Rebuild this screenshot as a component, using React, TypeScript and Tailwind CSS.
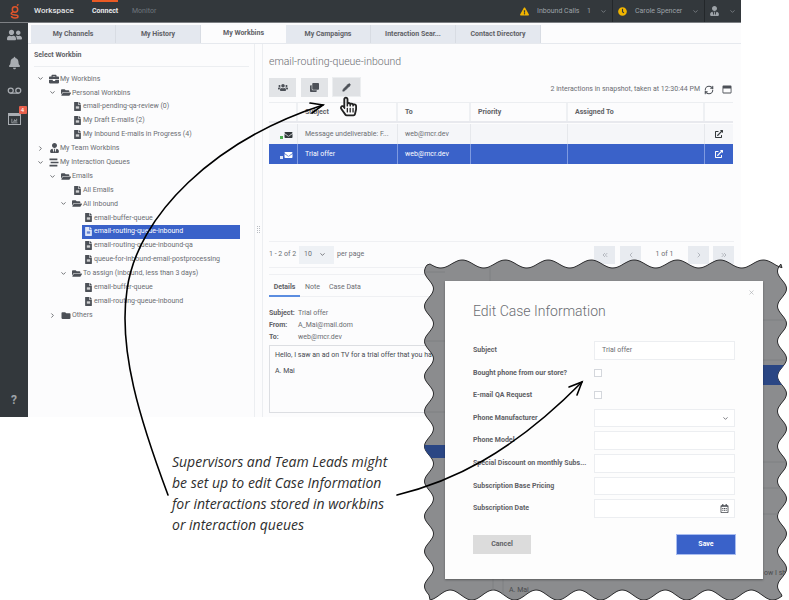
import React from 'react';
import { ChevronDown, ChevronRight, ChevronsLeft, ChevronsRight, ChevronLeft, RefreshCw, Voicemail, X, Pencil } from 'lucide-react';
import {
  FaUserFriends, FaBell, FaFolder, FaFolderOpen, FaBriefcase, FaUserTie, FaFileAlt, FaEnvelope,
  FaRegHandPointer, FaExternalLinkAlt, FaRegWindowMaximize, FaClock, FaExclamationTriangle,
  FaRegCalendarAlt, FaChartBar, FaStream, FaClone, FaUsers,
} from 'react-icons/fa';

type TreeRow = {
  label: string;
  level: 0 | 1 | 2 | 3;
  icon: 'case' | 'team' | 'queue' | 'open' | 'closed' | 'file';
  chevron?: 'down' | 'right';
  selected?: boolean;
};

const tree: TreeRow[] = [
  { label: 'My Workbins', level: 0, icon: 'case', chevron: 'down' },
  { label: 'Personal Workbins', level: 1, icon: 'open', chevron: 'down' },
  { label: 'email-pending-qa-review (0)', level: 2, icon: 'file' },
  { label: 'My Draft E-mails (2)', level: 2, icon: 'file' },
  { label: 'My Inbound E-mails in Progress (4)', level: 2, icon: 'file' },
  { label: 'My Team Workbins', level: 0, icon: 'team', chevron: 'right' },
  { label: 'My Interaction Queues', level: 0, icon: 'queue', chevron: 'down' },
  { label: 'Emails', level: 1, icon: 'open', chevron: 'down' },
  { label: 'All Emails', level: 2, icon: 'file' },
  { label: 'All Inbound', level: 2, icon: 'open', chevron: 'down' },
  { label: 'email-buffer-queue', level: 3, icon: 'file' },
  { label: 'email-routing-queue-inbound', level: 3, icon: 'file', selected: true },
  { label: 'email-routing-queue-inbound-qa', level: 3, icon: 'file' },
  { label: 'queue-for-inbound-email-postprocessing', level: 3, icon: 'file' },
  { label: 'To assign (inbound, less than 3 days)', level: 2, icon: 'open', chevron: 'down' },
  { label: 'email-buffer-queue', level: 3, icon: 'file' },
  { label: 'email-routing-queue-inbound', level: 3, icon: 'file' },
  { label: 'Others', level: 1, icon: 'closed', chevron: 'right' },
];

const levelPad = ['pl-[9px]', 'pl-[21px]', 'pl-[32px]', 'pl-[43px]'];

const TreeIcon = ({ icon }: { icon: TreeRow['icon'] }) => {
  switch (icon) {
    case 'case':
      return <FaBriefcase className="w-[10px] h-[10px]" />;
    case 'team':
      return <FaUserTie className="w-[9px] h-[10px]" />;
    case 'queue':
      return <FaStream className="w-[10px] h-[9px]" />;
    case 'open':
      return <FaFolderOpen className="w-[10px] h-[9px]" />;
    case 'closed':
      return <FaFolder className="w-[10px] h-[9px]" />;
    default:
      return <FaFileAlt className="w-[7px] h-[9px]" />;
  }
};

const tabs = ['My Channels', 'My History', 'My Workbins', 'My Campaigns', 'Interaction Sear...', 'Contact Directory'];

const fields = [
  { label: 'Subject', kind: 'text', value: 'Trial offer' },
  { label: 'Bought phone from our store?', kind: 'check' },
  { label: 'E-mail QA Request', kind: 'check' },
  { label: 'Phone Manufacturer', kind: 'select' },
  { label: 'Phone Model', kind: 'text' },
  { label: 'Special Discount on monthly Subs...', kind: 'text' },
  { label: 'Subscription Base Pricing', kind: 'text' },
  { label: 'Subscription Date', kind: 'date' },
];

// torn paper edge of the dialog cut-out
const buildTorn = () => {
  const pts: string[] = [];
  const wave = (v: number, len: number) => Math.sin((2 * Math.PI * v) / len);
  for (let x = 430; x <= 782; x += 2) pts.push(x + ',' + (264 + 4 * wave(x, 43)).toFixed(1));
  for (let y = 264; y <= 595; y += 2) pts.push((782 + 4.5 * wave(y, 35)).toFixed(1) + ',' + y);
  for (let x = 782; x >= 430; x -= 2) pts.push(x + ',' + (595 + 5 * wave(x + 12, 43)).toFixed(1));
  for (let y = 595; y >= 264; y -= 2) pts.push((429 + 4.5 * wave(y, 35)).toFixed(1) + ',' + y);
  return 'M' + pts.join(' L') + ' Z';
};
const torn = buildTorn();

const PagerBtn = ({ children }: { children: React.ReactNode }) => (
  <div className="w-[21px] h-[18px] bg-[#e8ebf0] flex items-center justify-center text-[#9a9ea6]">{children}</div>
);

export default function App() {
  return (
    <div className="relative w-[789px] h-[600px] bg-white overflow-hidden font-['Roboto',sans-serif] text-[7px] text-[#6b6d72]">
      {/* app window */}
      <div className="w-[741px] h-[417px] flex flex-col bg-[#fcfcfd]">
        <header className="h-[23px] shrink-0 bg-[#33383c] border-b border-[#7d8084] flex items-center text-[#9ea3a8]">
          <div className="w-[34px] flex justify-center pr-[4px]">
            <svg width="10" height="15" viewBox="0 0 10 15" fill="none" stroke="#e0552b" strokeWidth="1.5">
              <circle cx="5" cy="5.5" r="2.7" />
              <path d="M7 1.5 L8.5 0.5 M3 8 C0 9 1 11 5 11 C9 11 9 14 5 14 C2.5 14 1.5 13 1.5 12" />
            </svg>
          </div>
          <span className="w-[58px] text-[8px] font-medium text-[#e3e5e8]">Workspace</span>
          <div className="relative w-[40px] text-[7px] font-bold text-[#e8eaec] h-full flex items-center">
            <span className="absolute left-0 top-0 w-[26px] h-[2px] bg-[#ea5a24]"></span>
            Connect
          </div>
          <span className="text-[7px] text-[#6f767d]">Monitor</span>
          <div className="flex-1"></div>
          <FaExclamationTriangle className="w-[9px] h-[9px] text-[#f0b400] mr-[8px]" />
          <span className="w-[50px] whitespace-nowrap">Inbound Calls</span>
          <span className="w-[13px]">1</span>
          <ChevronDown className="w-[7px] h-[7px] mr-[5px]" />
          <div className="w-px h-full bg-[#23272a] mr-[5px]"></div>
          <FaClock className="w-[9px] h-[9px] text-[#f0b400] mr-[8px]" />
          <span className="w-[57px] whitespace-nowrap">Carole Spencer</span>
          <ChevronDown className="w-[7px] h-[7px] mr-[5px]" />
          <div className="w-px h-full bg-[#23272a] mr-[5px]"></div>
          <FaUserTie className="w-[9px] h-[10px] mr-[10px]" />
          <ChevronDown className="w-[7px] h-[7px] mr-[5px]" />
        </header>

        <div className="flex-1 flex min-h-0">
          <aside className="w-[28px] shrink-0 bg-[#33383c] flex flex-col items-center text-[#a9adb2] pt-[5px]">
            <FaUserFriends className="w-[15px] h-[14px]" />
            <FaBell className="w-[11px] h-[14px] mt-[14px]" />
            <Voicemail className="w-[15px] h-[15px] mt-[13px]" />
            <div className="relative mt-[15px]">
              <div className="w-[13px] h-[12px] border border-[#a9adb2] border-t-[3px] flex items-end justify-center">
                <FaChartBar className="w-[7px] h-[6px]" />
              </div>
              <span className="absolute -top-[7px] -right-[6px] w-[8px] h-[8px] rounded-[1px] bg-[#e8604c] text-white text-[6px] leading-[8px] text-center">4</span>
            </div>
            <div className="flex-1"></div>
            <span className="text-[12px] font-bold mb-[8px] text-[#9ea3a8]">?</span>
          </aside>

          <div className="flex-1 flex flex-col min-w-0">
            <div className="h-[21px] shrink-0 flex items-end pl-[3px] border-b border-[#e6e9ee]">
              {tabs.map((t) => (
                <div
                  key={t}
                  className={
                    t === 'My Workbins'
                      ? 'w-[85px] h-[19px] flex items-center justify-center bg-[#fcfcfd] font-bold text-[#5f6166]'
                      : 'w-[85px] h-[18px] flex items-center justify-center bg-[#e4e8ef] border-r border-[#d8dce3] font-bold text-[#5f6166]'
                  }
                >
                  {t}
                </div>
              ))}
            </div>

            <div className="flex-1 flex min-h-0">
              {/* workbin tree */}
              <div className="w-[227px] shrink-0 border-r border-[#eceef1] pt-[7px]">
                <div className="ml-[6px] mr-[5px] pb-[6px] border-b border-[#eceef1] font-bold text-[#5f6166] leading-[9px]">Select Workbin</div>
                <div className="mt-[5px] w-[212px]">
                  {tree.map((r, i) => (
                    <div key={i} className={'h-[13.9px] flex items-center ' + levelPad[r.level]}>
                      <span className="w-[11px] shrink-0 flex items-center text-[#5f6166]">
                        {r.chevron === 'down' && <ChevronDown className="w-[7px] h-[7px]" strokeWidth={3} />}
                        {r.chevron === 'right' && <ChevronRight className="w-[7px] h-[7px]" strokeWidth={3} />}
                      </span>
                      <div className={r.selected ? 'flex-1 h-full flex items-center bg-[#3a62c9] text-white' : 'flex-1 h-full flex items-center'}>
                        <span className={r.selected ? 'w-[12px] shrink-0 flex justify-center text-[#dfe6f7]' : 'w-[12px] shrink-0 flex justify-center text-[#4c5057]'}>
                          <TreeIcon icon={r.icon} />
                        </span>
                        <span className="whitespace-nowrap">{r.label}</span>
                      </div>
                    </div>
                  ))}
                </div>
              </div>

              {/* splitter */}
              <div className="w-[8px] shrink-0 border-r border-[#eceef1] flex items-center justify-center pb-[2px]">
                <div className="w-[3px] h-[7px] border-x border-dotted border-[#b8bcc2]"></div>
              </div>

              {/* interaction list */}
              <div className="flex-1 flex flex-col min-w-0 pl-[6px] pr-[7px] pt-[11px]">
                <h2 className="text-[10.5px] font-light leading-[14px] text-[#6b6d72]">email-routing-queue-inbound</h2>
                <div className="flex items-center mt-[8px] h-[20px]">
                  <div className="w-[27px] h-[19px] bg-[#e2e4e7] flex items-center justify-center text-[#4c5057] mr-[5px]"><FaUsers className="w-[10px] h-[9px]" /></div>
                  <div className="w-[27px] h-[19px] bg-[#e2e4e7] flex items-center justify-center text-[#4c5057] mr-[4px]"><FaClone className="w-[9px] h-[9px]" /></div>
                  <div className="w-[29px] h-[20px] bg-[#dfe1e4] border border-[#eceef0] flex items-center justify-center text-[#4c5057]"><Pencil className="w-[9px] h-[9px]" fill="#4c5057" /></div>
                  <div className="flex-1"></div>
                  <span className="mt-[5px]">2 interactions in snapshot, taken at 12:30:44 PM</span>
                  <RefreshCw className="w-[10px] h-[10px] ml-[4px] mr-[8px] mt-[5px] text-[#4c5057]" strokeWidth={2.5} />
                  <FaRegWindowMaximize className="w-[10px] h-[9px] mt-[5px] mr-[2px] text-[#4c5057]" />
                </div>

                <div className="mt-[5px] w-[464px]">
                  <div className="grid grid-cols-[29px_100px_73px_97px_137px_28px] h-[21px] border-t border-[#eceef1] border-b-2 border-b-[#e8e9ee] font-bold text-[#5f6166]">
                    <div className="border-r-2 border-[#eef0f3]"></div>
                    <div className="border-r-2 border-[#eef0f3] flex items-center pl-[7px]">Subject</div>
                    <div className="border-r-2 border-[#eef0f3] flex items-center pl-[7px]">To</div>
                    <div className="border-r-2 border-[#eef0f3] flex items-center pl-[7px]">Priority</div>
                    <div className="border-r-2 border-[#eef0f3] flex items-center pl-[7px]">Assigned To</div>
                    <div></div>
                  </div>
                  <div className="grid grid-cols-[29px_100px_73px_97px_137px_28px] h-[20px] mt-px bg-[#f5f6f9]">
                    <div className="border-r border-[#e6e8ec] flex items-center justify-end pr-[4px] pt-[2px] text-[#33383c]"><span className="w-[3px] h-[3px] bg-[#4caf50] mr-[1px] mt-[4px]"></span><FaEnvelope className="w-[9px] h-[8px]" /></div>
                    <div className="border-r border-[#e6e8ec] flex items-center pl-[7px] whitespace-nowrap">Message undeliverable: F...</div>
                    <div className="border-r border-[#e6e8ec] flex items-center pl-[7px]">web@mcr.dev</div>
                    <div className="border-r border-[#e6e8ec]"></div>
                    <div className="border-r border-[#e6e8ec]"></div>
                    <div className="flex items-center justify-center text-[#33383c]"><FaExternalLinkAlt className="w-[8px] h-[8px]" /></div>
                  </div>
                  <div className="grid grid-cols-[29px_100px_73px_97px_137px_28px] h-[20px] bg-[#3a62c9] text-white">
                    <div className="border-r border-[#7f9ae0] flex items-center justify-end pr-[4px] pt-[2px]"><span className="w-[3px] h-[3px] bg-[#dfe6f7] mr-[1px] mt-[4px]"></span><FaEnvelope className="w-[9px] h-[8px]" /></div>
                    <div className="border-r border-[#7f9ae0] flex items-center pl-[7px]">Trial offer</div>
                    <div className="border-r border-[#7f9ae0] flex items-center pl-[7px]">web@mcr.dev</div>
                    <div className="border-r border-[#7f9ae0]"></div>
                    <div className="border-r border-[#7f9ae0]"></div>
                    <div className="flex items-center justify-center"><FaExternalLinkAlt className="w-[8px] h-[8px]" /></div>
                  </div>
                </div>

                <div className="mt-[77px] w-[465px] h-[27px] border-y border-[#eff0f3] flex items-center">
                  <span className="w-[30px] whitespace-nowrap">1 - 2 of 2</span>
                  <div className="w-[35px] h-[18px] bg-[#eef1f5] flex items-center justify-between pl-[5px] pr-[8px]"><span>10</span><ChevronDown className="w-[7px] h-[7px]" strokeWidth={3} /></div>
                  <span className="ml-[3px]">per page</span>
                  <div className="flex-1"></div>
                  <PagerBtn><ChevronsLeft className="w-[8px] h-[8px]" /></PagerBtn>
                  <div className="w-[5px]"></div>
                  <PagerBtn><ChevronLeft className="w-[8px] h-[8px]" /></PagerBtn>
                  <span className="w-[47px] text-center">1 of 1</span>
                  <PagerBtn><ChevronRight className="w-[8px] h-[8px]" /></PagerBtn>
                  <div className="w-[4px]"></div>
                  <PagerBtn><ChevronsRight className="w-[8px] h-[8px]" /></PagerBtn>
                </div>

                <div className="mt-[6px] w-[465px] border-t border-[#eff0f3] pt-[7px] flex-1 flex flex-col min-h-0">
                  <div className="flex h-[15px] border-b border-[#eff0f3]">
                    <div className="w-[31px] h-[15px] border-b-2 border-[#5b8de0] text-center font-bold text-[#5f6166]">Details</div>
                    <span className="ml-[5px]">Note</span>
                    <span className="ml-[9px]">Case Data</span>
                  </div>
                  <div className="mt-[10px] grid grid-cols-[29px_1fr] auto-rows-[12.2px] items-center">
                    <span className="font-bold text-[#5f6166]">Subject:</span><span>Trial offer</span>
                    <span className="font-bold text-[#5f6166]">From:</span><span>A_Mai@mail.dom</span>
                    <span className="font-bold text-[#5f6166]">To:</span><span>web@mcr.dev</span>
                  </div>
                  <div className="mt-[1px] w-[250px] h-[68px] border border-[#dcdee2] pl-[5px] pt-[4px] text-[#45494f] whitespace-nowrap">
                    <p>Hello, I saw an ad on TV for a trial offer that you have</p>
                    <p className="mt-[6px]">A. Mai</p>
                  </div>
                </div>
              </div>
            </div>
          </div>
        </div>
      </div>

      {/* torn cut-out behind the dialog */}
      <svg className="absolute left-0 top-0 pointer-events-none" width="789" height="600">
        <defs>
          <clipPath id="torn"><path d={torn} /></clipPath>
        </defs>
        <path d={torn} fill="#8b8c8e" stroke="#2c2c2e" strokeWidth="1" />
        <g clipPath="url(#torn)">
          <rect x="763" y="365" width="30" height="20" fill="#2a4684" />
          <rect x="420" y="445" width="25" height="13" fill="#2a4684" />
          <path d="M420 272 H445 M490 262 V281 M763 320 H790 M763 360 H790 M763 462 H790 M763 488 H790 M763 514 H790 M420 341 H445 M420 412 H445 M503 579 V600 M493 579 V600" stroke="#7f8082" strokeWidth="1" />
          <text x="764" y="575" fontSize="7" fill="#4a4b4d">ow I sh</text>
          <text x="509" y="592" fontSize="7" fill="#4a4b4d">A. Mai</text>
        </g>
      </svg>

      {/* dialog */}
      <div className="absolute left-[445px] top-[281px] w-[318px] h-[298px] bg-[#fdfdfd] shadow-[0_1px_2px_rgba(0,0,0,0.35)] px-[28px] pt-[22px] text-[#5f6166]">
        <X className="absolute right-[8px] top-[8px] w-[7px] h-[7px] text-[#a5a8ad]" />
        <h1 className="text-[14px] font-light leading-[16px] text-[#6b6d72]">Edit Case Information</h1>
        <div className="mt-[20px]">
          {fields.map((f) => (
            <div key={f.label} className="h-[22.6px] flex items-center">
              <span className="w-[121px] shrink-0 text-[7px] font-bold whitespace-nowrap">{f.label}</span>
              {f.kind === 'check' ? (
                <div className="w-[8px] h-[8px] border border-[#d4d7dc] bg-white"></div>
              ) : (
                <div className="w-[141px] h-[18.5px] border border-[#eceef1] bg-white flex items-center justify-between pl-[7px] pr-[5px] font-normal text-[#6b6d72]">
                  <span>{f.value}</span>
                  {f.kind === 'select' && <ChevronDown className="w-[7px] h-[7px]" strokeWidth={3} />}
                  {f.kind === 'date' && <FaRegCalendarAlt className="w-[9px] h-[9px] text-[#45494f]" />}
                </div>
              )}
            </div>
          ))}
        </div>
        <div className="mt-[15px] flex justify-between">
          <button className="w-[58px] h-[19px] bg-[#dcdcdc] font-bold text-[#5f6166]">Cancel</button>
          <button className="w-[58px] h-[19px] bg-[#3a62c9] ring-1 ring-[#a9bdf0] font-bold text-white">Save</button>
        </div>
      </div>

      {/* callout arrows */}
      <svg className="absolute left-0 top-0 pointer-events-none" width="789" height="600" fill="none" stroke="#000" strokeWidth="1.6" strokeLinecap="round">
        <path d="M168 495 C140 420 118 350 127 290 C137 215 215 140 323 105" />
        <path d="M310 103 L323 105 L312 113" />
        <path d="M397 495 C450 482 510 455 582 382" />
        <path d="M569 387 L582 382 L577 395" />
      </svg>

      <FaRegHandPointer className="absolute left-[340px] top-[96px] w-[17px] h-[21px] text-[#222]" />

      <div className="absolute left-[172px] top-[451px] w-[240px] italic font-['Open_Sans',sans-serif] text-[14px] leading-[21px] text-[#2e2e2e]">
        <p>Supervisors and Team Leads might</p>
        <p>be set up to edit Case Information</p>
        <p>for interactions stored in workbins</p>
        <p>or interaction queues</p>
      </div>
    </div>
  );
}
